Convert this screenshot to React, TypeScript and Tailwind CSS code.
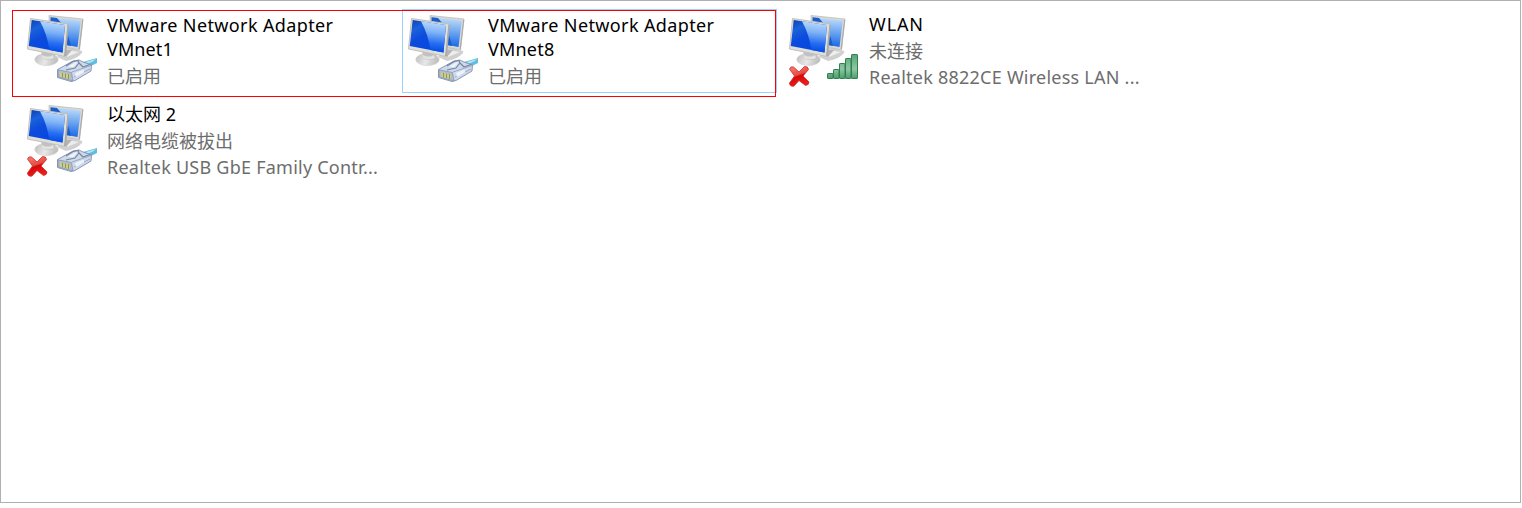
import React from 'react';

type Badge = 'cable' | 'signal';

interface Line {
  text: string;
  spacing?: string;
}

interface Adapter {
  id: string;
  title: Line[];
  status: string;
  device?: string;
  badge: Badge;
  disconnected?: boolean;
  selected?: boolean;
  titleClass: string;
}

const adapters: Adapter[] = [
  {
    id: 'vmnet1',
    title: [{ text: 'VMware Network Adapter', spacing: 'tracking-[0.37px]' }, { text: 'VMnet1', spacing: 'tracking-[0.1px]' }],
    status: '已启用',
    badge: 'cable',
    titleClass: 'pt-1',
  },
  {
    id: 'vmnet8',
    title: [{ text: 'VMware Network Adapter', spacing: 'tracking-[0.37px]' }, { text: 'VMnet8', spacing: 'tracking-[0.2px]' }],
    status: '已启用',
    badge: 'cable',
    selected: true,
    titleClass: 'pt-1',
  },
  {
    id: 'wlan',
    title: [{ text: 'WLAN', spacing: 'tracking-[0.9px]' }],
    status: '未连接',
    device: 'Realtek 8822CE Wireless LAN ...',
    badge: 'signal',
    disconnected: true,
    titleClass: 'pt-[3px]',
  },
  {
    id: 'eth2',
    title: [{ text: '以太网 2' }],
    status: '网络电缆被拔出',
    device: 'Realtek USB GbE Family Contr...',
    badge: 'cable',
    disconnected: true,
    titleClass: 'pt-[3px]',
  },
];

function Cable() {
  return (
    <g>
      <path d="M83 62 L97 58 L97 63 L88 67.5 Z" fill="#63bcdc" />
      <path d="M86 62 L96 59 L93 61.5 L87 64 Z" fill="#b2e6f4" />
      <path d="M57.5 69.5 L73 61 L79 60 L83 62 L91.5 65 L91 71 L75 80.5 L71 81.5 L57.5 77.5 Z" fill="#ced9ea" stroke="#8090b0" strokeWidth="0.9" strokeLinejoin="round" />
      <path d="M58 69.8 L71.5 72.5 L73 81 L58 77 Z" fill="#b0bccf" stroke="#8390a9" strokeWidth="0.7" />
      <path d="M72 72 L91 65.5 M74 77 L90 69" stroke="#94a3be" strokeWidth="0.9" />
      <path d="M66 66 L73 61.5 L78 60.5 L79 63 L75 68 L66 70 M79 63 L83 67 L90 64.5" stroke="#71839f" strokeWidth="1.1" strokeLinejoin="round" />
      <path d="M68 66.5 L76 62 L77 63 L73 67.5 Z" fill="#eff4fa" />
      <path d="M75 73 L84 69.5 L84 72.5 L76 77 Z" fill="#edf3fc" />
      <path d="M60 72.5 L70 74.5 L70 79 L60 76.5 Z" fill="#d0cf78" />
      <path d="M62.5 73 V77.5 M65.5 73.5 V78 M68.5 74 V79" stroke="#7b8871" strokeWidth="0.8" />
    </g>
  );
}

function Signal() {
  const bars = [
    [65.5, 73.5], [71.5, 69.5], [77.5, 63.5], [83.5, 58.5], [89.5, 54.5],
  ];
  return (
    <g fill="url(#signalFill)" stroke="#2f7f50" strokeWidth="1">
      {bars.map(([x, y]) => (
        <rect key={x} x={x} y={y} width={x > 89 ? 6 : 5.5} height={78.5 - y} rx="0.6" />
      ))}
    </g>
  );
}

function AdapterIcon({ badge, disconnected }: { badge: Badge; disconnected?: boolean }) {
  return (
    <svg className="block h-[84px] w-[80px] shrink-0" viewBox="21 9 80 84" fill="none">
      <defs>
        <linearGradient id="frontScreen" x1="30" y1="20" x2="45" y2="50" gradientUnits="userSpaceOnUse">
          <stop stopColor="#0b3fae" />
          <stop offset="0.3" stopColor="#1b62dc" />
          <stop offset="0.6" stopColor="#0c4bdc" />
          <stop offset="1" stopColor="#0848e0" />
        </linearGradient>
        <linearGradient id="screenShine" x1="54" y1="23" x2="51" y2="50" gradientUnits="userSpaceOnUse">
          <stop stopColor="#b5d5fa" />
          <stop offset="0.35" stopColor="#7db2f7" />
          <stop offset="0.75" stopColor="#256df0" />
          <stop offset="1" stopColor="#0751ea" />
        </linearGradient>
        <linearGradient id="backScreen" x1="74" y1="19" x2="72" y2="47" gradientUnits="userSpaceOnUse">
          <stop stopColor="#b9d9fa" />
          <stop offset="0.5" stopColor="#68a2ef" />
          <stop offset="1" stopColor="#1767e6" />
        </linearGradient>
        <linearGradient id="standFill" x1="35" y1="54" x2="57" y2="65" gradientUnits="userSpaceOnUse">
          <stop stopColor="#bdbdbd" />
          <stop offset="0.5" stopColor="#e8e8e8" />
          <stop offset="1" stopColor="#b5b5b5" />
        </linearGradient>
        <linearGradient id="signalFill" x1="80" y1="54" x2="80" y2="79" gradientUnits="userSpaceOnUse">
          <stop stopColor="#58a575" />
          <stop offset="0.6" stopColor="#8cc7a1" />
          <stop offset="1" stopColor="#4b9969" />
        </linearGradient>
        <linearGradient id="crossFill" x1="30" y1="66" x2="37" y2="86" gradientUnits="userSpaceOnUse">
          <stop stopColor="#f2827a" />
          <stop offset="0.48" stopColor="#e84b42" />
          <stop offset="0.55" stopColor="#d10b0b" />
          <stop offset="1" stopColor="#ef1d1d" />
        </linearGradient>
      </defs>
      <path d="M65 48 L75 48 L76 50 Q84 50 82 53 Q77 59 66 61 L57 57 Z" fill="#d0d0d0" />
      <path d="M67 50 L79 52 L67 57 Z" fill="#eeeeee" />
      <path d="M66 50 L72 50 L66 57 Z" fill="#b5b5b5" />
      <path d="M49 15.5 L83 19 L79.5 50 L50 44 Z" fill="#d8d8d6" stroke="#bcbcb9" strokeWidth="0.8" strokeLinejoin="round" />
      <path d="M50.5 17.3 L80.8 20.8 L77.5 47 L51 42 Z" fill="url(#backScreen)" />
      <path d="M50.5 17.3 L57 18 Q67 28 71 46 L51 42 Z" fill="#1c5dca" />
      <path d="M82.7 20 L79.2 49" stroke="#aaa" strokeWidth="1.1" />
      <ellipse cx="46.5" cy="59.5" rx="11.7" ry="6.1" fill="url(#standFill)" stroke="#d2d2d2" strokeWidth="0.7" />
      <path d="M41 49 L55 52 L55 59 Q48 62 42 58 Z" fill="#c1c1c1" />
      <path d="M42 55 Q48 58 53 55 L54 58 Q48 61 42 58 Z" fill="#e2e2e2" />
      <path d="M30.5 18.5 L68 24 L65 56.5 L27.5 49 Z" fill="#dededb" stroke="#c0c0bc" strokeWidth="1" strokeLinejoin="round" />
      <path d="M67.5 24.5 L68.7 25 L66 56 L64 56 Z" fill="#aaaaa7" />
      <path d="M31.7 20 L65 25 L62.5 52.5 L28.8 46 Z" fill="url(#frontScreen)" />
      <path d="M40 21.3 L65 25 L62.5 52.5 L49.5 50 Q47 34 40 21.3 Z" fill="url(#screenShine)" />
      {badge === 'cable' ? <Cable /> : <Signal />}
      {disconnected && (
        <path
          d="M27.5 69 Q28.5 66 31.5 67 L37 72 L42.5 66.5 Q46 66 46.5 69.5 L41 76 L47 82 Q47 85 43.5 85.5 L37 80.5 L32 86 Q28 87 27.5 83 L32.5 76 Z"
          fill="url(#crossFill)"
          stroke="#d42622"
          strokeWidth="0.8"
        />
      )}
    </svg>
  );
}

function AdapterTile({ adapter }: { adapter: Adapter }) {
  return (
    <div className={`flex h-[84px] w-[375px] ${adapter.selected ? 'outline outline-1 -outline-offset-1 outline-[#99d1ff]' : ''}`}>
      <AdapterIcon badge={adapter.badge} disconnected={adapter.disconnected} />
      <div className={`ml-1.5 text-[18px] whitespace-nowrap ${adapter.titleClass}`}>
        {adapter.title.map((line) => (
          <div key={line.text} className={`h-6 leading-6 text-black ${line.spacing ?? ''}`}>{line.text}</div>
        ))}
        <div className="mt-[3px] h-6 leading-6 text-[#6d6d6d]">{adapter.status}</div>
        {adapter.device && (
          <div className="mt-0.5 h-6 leading-6 tracking-[0.24px] text-[#6d6d6d]">{adapter.device}</div>
        )}
      </div>
    </div>
  );
}

export default function App() {
  return (
    <div className="h-[508px] w-[1522px] overflow-hidden bg-white font-['Noto_Sans','Noto_Sans_CJK_SC',sans-serif]">
      <div className="relative h-[503px] w-[1521px] border border-[#b0b0b0] pt-2 pl-5">
        <div className="grid grid-cols-[381px_381px_381px] gap-y-1.5">
          {adapters.map((adapter) => (
            <AdapterTile key={adapter.id} adapter={adapter} />
          ))}
        </div>
        <div className="pointer-events-none absolute top-[9px] left-[11px] h-[87px] w-[764px] border border-[#ff0000]" />
      </div>
    </div>
  );
}
